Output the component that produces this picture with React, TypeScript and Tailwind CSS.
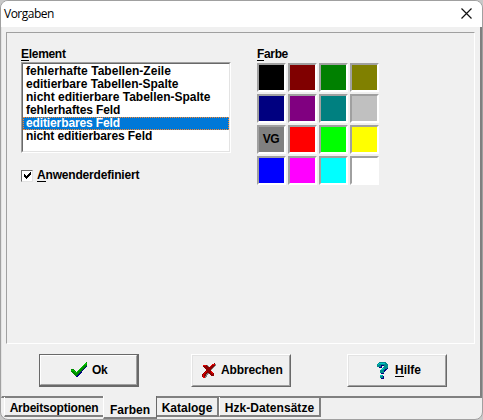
import React from "react";

const font = "font-['Liberation_Sans',Arial,sans-serif] font-bold text-[12px] leading-[13px] whitespace-nowrap text-black";

const items = [
  { text: "fehlerhafte Tabellen-Zeile", spacing: "tracking-[0.04px]" },
  { text: "editierbare Tabellen-Spalte", spacing: "tracking-[0px]" },
  { text: "nicht editierbare Tabellen-Spalte", spacing: "tracking-[0px]" },
  { text: "fehlerhaftes Feld", spacing: "tracking-[-0.1px]" },
  { text: "editierbares Feld", spacing: "tracking-[-0.12px]", selected: true },
  { text: "nicht editierbares Feld", spacing: "tracking-[-0.08px]" },
];

const colors = [
  "bg-black", "bg-[#800000]", "bg-[#008000]", "bg-[#808000]",
  "bg-[#000080]", "bg-[#800080]", "bg-[#008080]", "bg-[#c0c0c0]",
  "bg-[#808080]", "bg-[#ff0000]", "bg-[#00ff00]", "bg-[#ffff00]",
  "bg-[#0000ff]", "bg-[#ff00ff]", "bg-[#00ffff]", "bg-white",
];

function Mnemonic({ text }: { text: string }) {
  return (
    <span>
      <span className="inline-block h-[13px] border-b border-black">{text[0]}</span>
      {text.slice(1)}
    </span>
  );
}

function CheckIcon() {
  return (
    <svg width="17" height="16" viewBox="0 0 17 16" shapeRendering="crispEdges">
      <path d="M1 9h4l1 2 7-8 3-2v3l-5 6-4 5H5L1 11z" fill="#000080" />
      <path d="M0 7h3l2 3 8-8 3-2v3l-5 5-5 6H4L0 10z" fill="#008a00" />
      <path d="M0 8h2l3 3 8-8 3-2" fill="none" stroke="#00c800" />
    </svg>
  );
}

function CrossIcon() {
  return (
    <svg width="14" height="15" viewBox="0 0 14 15" shapeRendering="crispEdges">
      <path d="M2 2h4l2 3 4-4h2v2L9 7l3 4v2h-2L7 10l-3 5H1v-3l4-4-3-4z" fill="#808080" />
      <path d="M1 2h3l3 3 3-4 3-1v2L9 7l3 4v2H9L6 9l-3 5H0v-3l4-4-3-3z" fill="#8c0000" />
      <path d="M1 3V2h3M8 4l3-3h2M5 8l-4 4v2h2M9 8l2 3" fill="none" stroke="#e80000" />
    </svg>
  );
}

function HelpIcon() {
  return (
    <svg width="12" height="17" viewBox="0 0 12 17" shapeRendering="crispEdges">
      <path d="M1 5V3l2-2h6l2 2v4L7 10v2H4V9l4-3V4H5v2H2zM4 14h3v2l-1 1H4z" fill="#000080" />
      <path d="M0 4V2l2-2h6l3 2v4L7 8v3H3V8l4-3V3H4v2H0zM3 13h3v3H3z" fill="#008c8c" />
      <path d="M1 3l2-2h5M4 8l3-2M3 13h2" fill="none" stroke="#00c8c8" />
    </svg>
  );
}

function PushButton({ children, primary }: { children: React.ReactNode; primary?: boolean }) {
  return (
    <button
      className={
        primary
          ? "h-[33px] w-[100px] border border-r-2 border-b-2 border-[#696969] bg-[#f0f0f0]"
          : "h-[33px] w-[100px] border border-t-white border-r-[#696969] border-b-[#696969] border-l-white bg-[#f0f0f0]"
      }
    >
      <span
        className={`flex h-full w-full items-center border border-r-[#a0a0a0] border-b-[#a0a0a0] ${
          primary ? "border-t-white border-l-white" : "border-t-[#e3e3e3] border-l-[#e3e3e3]"
        }`}
      >
        {children}
      </span>
    </button>
  );
}

export default function App() {
  return (
    <div className="h-[420px] w-[483px] overflow-hidden bg-[#c8c8c8]">
      <div className={`relative flex h-[420px] w-[483px] flex-col overflow-hidden rounded-[8px] border border-[#a0a0a0] bg-[#f0f0f0] ${font}`}>
        <header className="flex h-[26px] shrink-0 items-center justify-between bg-white pr-[10px] pl-[3px]">
          <span className="mb-[2px] font-['Open_Sans','Noto_Sans',sans-serif] text-[12px] font-normal tracking-[-0.5px]">Vorgaben</span>
          <svg className="mb-[2px]" width="11" height="11" viewBox="0 0 11 11">
            <path d="M.5 .5l10 10M10.500 .5l-10 10" stroke="#111" strokeWidth="1.200" />
          </svg>
        </header>

        <div className="flex h-[371px] shrink-0 flex-col border-r-2 border-b-2 border-l border-r-[#808080] border-b-[#808080] border-l-[#e3e3e3] pt-[5px] pl-1">
          <main className="flex h-[312px] w-[469px] gap-[26px] border border-t-[#a0a0a0] border-r-white border-b-white border-l-[#a0a0a0] pt-[15px] pl-[14px]">
            <section className="w-[210px]">
              <div className="h-[14px]"><span className="tracking-[-0.3px]"><Mnemonic text="Element" /></span></div>
              <div className="h-[91px] w-[210px] border border-t-[#a0a0a0] border-r-white border-b-white border-l-[#a0a0a0]">
                <div className="h-full border border-t-[#696969] border-r-[#e3e3e3] border-b-[#e3e3e3] border-l-[#696969] bg-white pt-px">
                  {items.map((item) => (
                    <div
                      key={item.text}
                      className={`flex h-[13px] items-center ${
                        item.selected ? "border border-dotted border-[#ff8728] bg-[#0078d7] pl-[2px] text-white" : "pl-[3px]"
                      }`}
                    >
                      <span className={item.spacing}>{item.text}</span>
                    </div>
                  ))}
                </div>
              </div>
              <div className="mt-[16px] flex items-center gap-[4px]">
                <span className="flex h-[12px] w-[12px] items-center justify-center border border-t-[#696969] border-r-[#e3e3e3] border-b-[#e3e3e3] border-l-[#696969] bg-white">
                  <svg width="7" height="7" viewBox="0 0 7 7" shapeRendering="crispEdges">
                    <path d="M0 2h1v1h1v1h1V3h1V2h1V1h1V0h1v3H6v1H5v1H4v1H3v1H2V6H1V5H0z" fill="#000" />
                  </svg>
                </span>
                <span className="tracking-[-0.18px]"><Mnemonic text="Anwenderdefiniert" /></span>
              </div>
            </section>
            <section>
              <div className="h-[15px]"><span className="tracking-[-0.35px]"><Mnemonic text="Farbe" /></span></div>
              <div className="grid grid-cols-4 gap-[2px]">
                {colors.map((color, i) => (
                  <div key={color} className="h-[29px] w-[29px] border-2 border-t-[#a0a0a0] border-r-white border-b-white border-l-[#a0a0a0]">
                    <div className={`flex h-[25px] w-[25px] items-center justify-center ${color}`}>
                      {i === 8 && <span className="mr-px tracking-[-0.5px]">VG</span>}
                    </div>
                  </div>
                ))}
              </div>
            </section>
          </main>
          <div className="mt-[10px] flex pl-[33px]">
            <PushButton primary>
              <span className="ml-[30px]"><CheckIcon /></span>
              <span className="ml-[4px] tracking-[-0.3px]">Ok</span>
            </PushButton>
            <span className="w-[52px]" />
            <PushButton>
              <span className="ml-[9px]"><CrossIcon /></span>
              <span className="ml-[5px] tracking-[-0.12px]">Abbrechen</span>
            </PushButton>
            <span className="w-[56px]" />
            <PushButton>
              <span className="ml-[28px]"><HelpIcon /></span>
              <span className="ml-[6px]"><Mnemonic text="Hilfe" /></span>
            </PushButton>
          </div>
        </div>

        <nav className="-mt-px flex items-start pl-[3px]">
          <div className="flex h-[20px] w-[99px] items-center justify-center border-b-2 border-l border-b-[#808080] border-l-white pt-[4px] tracking-[-0.22px]">Arbeitsoptionen</div>
          <div className="z-10 -mt-px flex h-[23px] w-[54px] items-center justify-center border-r border-b-2 border-l border-r-[#696969] border-b-[#808080] border-l-white bg-[#f0f0f0] pt-[7px]">Farben</div>
          <div className="flex h-[20px] w-[62px] items-center justify-center border-r-2 border-b-2 border-[#808080] pt-[4px]">Kataloge</div>
          <div className="flex h-[20px] w-[102px] items-center justify-center border-r-2 border-b-2 border-l border-r-[#808080] border-b-[#808080] border-l-white pt-[4px] tracking-[0.05px]">Hzk-Datensätze</div>
        </nav>
      </div>
    </div>
  );
}
